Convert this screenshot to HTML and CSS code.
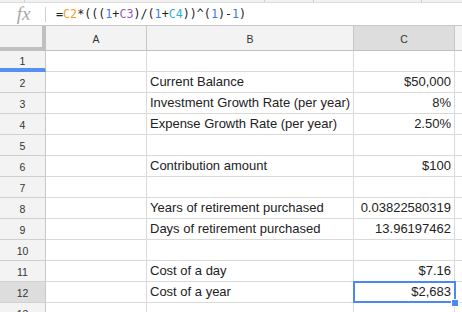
FILE: index.html
```html
<!DOCTYPE html>
<html>
<head>
<meta charset="utf-8">
<link rel="stylesheet" href="styles.css">
</head>
<body>
<div class="app">
  <div class="topstrip"><span class="ts ts1"></span><span class="ts ts2"></span><span class="ts ts3"></span><span class="ts ts4"></span></div>
  <div class="fbar">
    <span class="fx">fx</span>
    <span class="sep"></span>
    <span class="formula">=<span class="r1">C2</span>*(((<span class="n">1</span>+<span class="r2">C3</span>)/(<span class="n">1</span>+<span class="r3">C4</span>))^(<span class="n">1</span>)-<span class="n">1</span>)</span>
  </div>
  <div class="sheet">
    <div class="corner"></div>
    <div class="ch">A</div>
    <div class="ch">B</div>
    <div class="ch sel">C</div>
    <div class="ch last"></div>

    <div class="rh r1h">1</div><div class="c"></div><div class="c"></div><div class="c"></div><div class="c last"></div>
    <div class="rh">2</div><div class="c"></div><div class="c">Current Balance</div><div class="c num">$50,000</div><div class="c last"></div>
    <div class="rh">3</div><div class="c"></div><div class="c">Investment Growth Rate (per year)</div><div class="c num">8%</div><div class="c last"></div>
    <div class="rh">4</div><div class="c"></div><div class="c">Expense Growth Rate (per year)</div><div class="c num">2.50%</div><div class="c last"></div>
    <div class="rh">5</div><div class="c"></div><div class="c"></div><div class="c"></div><div class="c last"></div>
    <div class="rh">6</div><div class="c"></div><div class="c">Contribution amount</div><div class="c num">$100</div><div class="c last"></div>
    <div class="rh">7</div><div class="c"></div><div class="c"></div><div class="c"></div><div class="c last"></div>
    <div class="rh">8</div><div class="c"></div><div class="c">Years of retirement purchased</div><div class="c num">0.03822580319</div><div class="c last"></div>
    <div class="rh">9</div><div class="c"></div><div class="c">Days of retirement purchased</div><div class="c num">13.96197462</div><div class="c last"></div>
    <div class="rh">10</div><div class="c"></div><div class="c"></div><div class="c"></div><div class="c last"></div>
    <div class="rh">11</div><div class="c"></div><div class="c">Cost of a day</div><div class="c num">$7.16</div><div class="c last"></div>
    <div class="rh sel">12</div><div class="c"></div><div class="c">Cost of a year</div><div class="c num active">$2,683<span class="selbox"><span class="handle"></span></span></div><div class="c last"></div>
    <div class="rh">13</div><div class="c"></div><div class="c"></div><div class="c"></div><div class="c last"></div>
  </div>
</div>
</body>
</html>
```
FILE: styles.css
```css
* { box-sizing: border-box; }
html, body { margin: 0; padding: 0; background: #fff; }
body { width: 462px; height: 312px; overflow: hidden; font-family: "Liberation Sans", Arial, sans-serif; }
.app { width: 462px; height: 312px; overflow: hidden; }

.topstrip { height: 3px; background: #f1f1f1; border-bottom: 1px solid #dcdcdc; position: relative; }
.ts { position: absolute; top: 0; width: 1px; height: 2px; background: #cfcfcf; }
.ts1 { left: 24px; } .ts2 { left: 264px; } .ts3 { left: 313px; } .ts4 { left: 421px; }

.fbar { height: 23px; display: flex; align-items: center; border-bottom: 1px solid #c8c8c8; }
.fx { width: 45px; text-align: center; font-family: "Liberation Serif", "Times New Roman", serif; font-style: italic; font-size: 19px; color: #a8a8a8; line-height: 20px; padding-left: 2px; }
.sep { width: 1px; height: 15px; background: #d0d0d0; }
.formula { margin-left: 10px; font-family: "DejaVu Sans Mono", monospace; font-size: 11.7px; letter-spacing: 0; color: #222; white-space: pre; }
.r1 { color: #f29c22; }
.r2 { color: #9359c2; }
.r3 { color: #2fb1d1; }
.n { color: #3d7ce0; }

.sheet { display: grid; grid-template-columns: 46px 101px 207px 101px 1fr; grid-template-rows: 25px repeat(13, 21px); }
.corner { background: #f3f3f3; border-right: 4px solid #c0c0c0; border-bottom: 4px solid #c0c0c0; }
.ch { background: #f3f3f3; border-right: 1px solid #c8c8c8; border-bottom: 1px solid #c0c0c0; font-size: 10.5px; color: #333; display: flex; align-items: center; justify-content: center; padding-top: 1px; }
.ch.sel { background: #dddddd; }
.ch.last { border-right: none; }

.rh { background: #f3f3f3; border-right: 1px solid #c8c8c8; border-bottom: 1px solid #d0d0d0; font-size: 10.5px; color: #333; display: flex; align-items: center; justify-content: center; padding-top: 1px; }
.rh.sel { background: #dddddd; }
.rh.r1h { border-bottom: 4px solid #5591f5; padding-top: 3px; }

.c { border-right: 1px solid #dadada; border-bottom: 1px solid #dadada; font-size: 13px; line-height: 20px; color: #222; padding: 0 3px 0 3px; white-space: nowrap; overflow: visible; position: relative; }
.c.num { text-align: right; }
.c.last { border-right: none; }

.selbox { position: absolute; z-index: 5; left: -1px; top: -1px; right: -2px; bottom: -1px; border: 2px solid #4a89f3; }
.handle { position: absolute; right: -5px; bottom: -6px; width: 8px; height: 8px; background: #4a89f3; border: 1px solid #fff; }
```
